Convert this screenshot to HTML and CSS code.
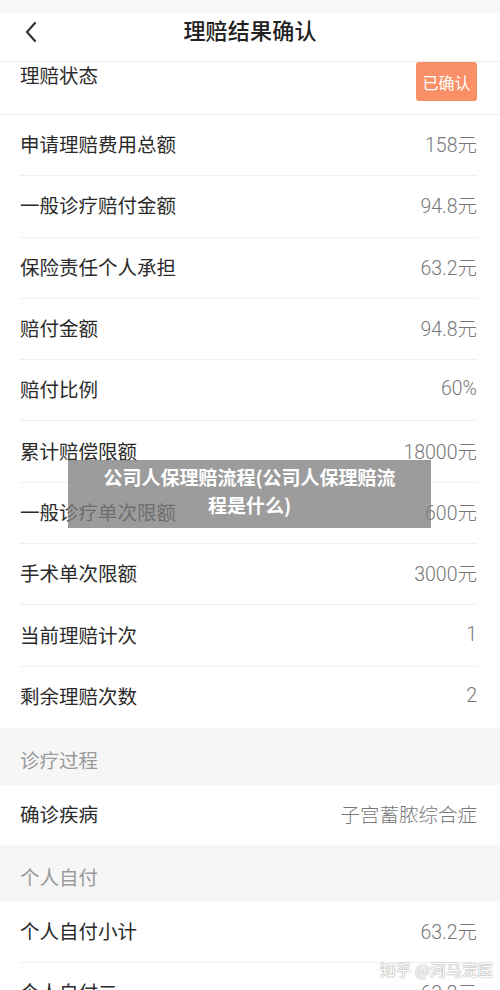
FILE: index.html
```html
<!DOCTYPE html>
<html lang="zh-CN">
<head>
<meta charset="utf-8">
<title>理赔结果确认</title>
<link rel="stylesheet" href="styles.css">
</head>
<body>
<div class="page">
  <header class="topbar">
    <svg class="back" width="14" height="22" viewBox="0 0 14 22"><polyline points="11,2 3,11 11,20" fill="none" stroke="#333" stroke-width="2.2" stroke-linecap="round" stroke-linejoin="round"/></svg>
    <h1 class="title">理赔结果确认</h1>
  </header>

  <div class="status-row">
    <span class="label">理赔状态</span>
    <span class="badge">已确认</span>
  </div>

  <div class="list">
    <div class="row"><span class="label">申请理赔费用总额</span><span class="value">158元</span></div>
    <div class="row"><span class="label">一般诊疗赔付金额</span><span class="value">94.8元</span></div>
    <div class="row"><span class="label">保险责任个人承担</span><span class="value">63.2元</span></div>
    <div class="row"><span class="label">赔付金额</span><span class="value">94.8元</span></div>
    <div class="row"><span class="label">赔付比例</span><span class="value">60%</span></div>
    <div class="row"><span class="label">累计赔偿限额</span><span class="value">18000元</span></div>
    <div class="row"><span class="label">一般诊疗单次限额</span><span class="value">600元</span></div>
    <div class="row"><span class="label">手术单次限额</span><span class="value">3000元</span></div>
    <div class="row"><span class="label">当前理赔计次</span><span class="value">1</span></div>
    <div class="row last"><span class="label">剩余理赔次数</span><span class="value">2</span></div>
  </div>

  <div class="section">诊疗过程</div>
  <div class="list">
    <div class="row short last"><span class="label">确诊疾病</span><span class="value">子宫蓄脓综合症</span></div>
  </div>

  <div class="section">个人自付</div>
  <div class="list">
    <div class="row"><span class="label">个人自付小计</span><span class="value">63.2元</span></div>
    <div class="row"><span class="label">个人自付二</span><span class="value">63.2元</span></div>
  </div>

  <div class="caption">公司人保理赔流程(公司人保理赔流<br>程是什么)</div>
  <div class="watermark">知乎 @河马宠医</div>
</div>
</body>
</html>
```

FILE: styles.css
```css
* { box-sizing: border-box; margin: 0; padding: 0; }
html, body { background: #fff; }
body {
  font-family: "Noto Sans CJK SC", "Noto Sans", sans-serif;
  color: #2b2b2b;
  width: 500px;
  height: 990px;
  overflow: hidden;
}
.page { position: relative; width: 500px; height: 990px; overflow: hidden; }

.topbar {
  height: 62px;
  display: flex;
  align-items: center;
  justify-content: center;
  position: relative;
  border-bottom: 1px solid #ececec;
  background: linear-gradient(#f8f8f8 0, #f8f8f8 13px, #fff 13px);
  padding-bottom: 3px;
}
.back { position: absolute; left: 24px; top: 21px; }
.title {
  font-size: 22px;
  font-weight: 500;
  color: #222;
  letter-spacing: 0.2px;
}

.status-row {
  height: 53px;
  display: flex;
  justify-content: space-between;
  align-items: flex-start;
  padding: 0 23px 0 20px;
  border-bottom: 1px solid #ececec;
}
.status-row .label { line-height: 26px; }
.badge {
  width: 61px;
  height: 39px;
  background: #f98f66;
  color: #fff;
  border-radius: 3px;
  font-size: 16px;
  display: flex;
  align-items: center;
  justify-content: center;
}

.label { font-size: 19.5px; color: #2b2b2b; }
.value {
  font-family: Roboto, "Noto Sans CJK SC", sans-serif;
  font-weight: 300;
  font-size: 19.5px;
  color: #777;
}
.value:lang(zh-CN) { }

.list { display: flex; flex-direction: column; }
.row {
  height: 61.3px;
  margin: 0 23px 0 20px;
  padding-bottom: 3px;
  display: flex;
  align-items: center;
  justify-content: space-between;
  border-bottom: 1px solid #efefef;
}
.row.last { border-bottom: none; }
.row.short { height: 60px; }

.section {
  height: 57px;
  background: #f6f6f7;
  color: #9a9a9a;
  font-size: 19.5px;
  padding: 18px 20px 0;
  line-height: 28px;
}

.caption {
  position: absolute;
  left: 68px;
  top: 460px;
  width: 363px;
  height: 68px;
  background: rgba(128, 128, 128, 0.78);
  color: #fff;
  font-size: 19px;
  font-weight: 700;
  text-align: center;
  line-height: 28px;
  padding-top: 3px;
}

.watermark {
  position: absolute;
  left: 380px;
  top: 958px;
  font-size: 15.5px;
  color: #fff;
  text-shadow: 0 0 1px #999, 0 0 2px #aaa;
  letter-spacing: 0.3px;
}
```
